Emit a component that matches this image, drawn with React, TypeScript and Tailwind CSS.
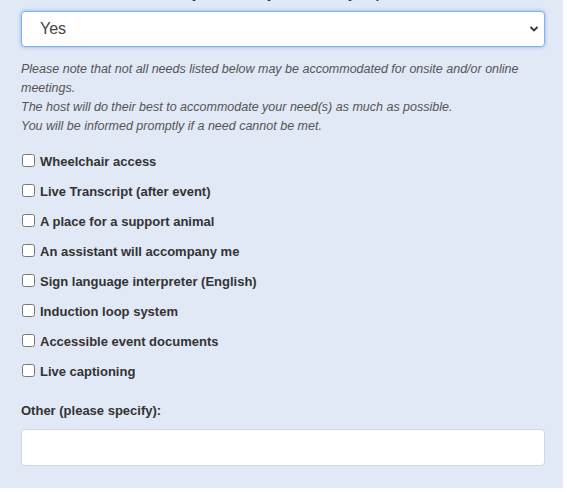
import React, { useState } from 'react';

const needs = [
  'Wheelchair access',
  'Live Transcript (after event)',
  'A place for a support animal',
  'An assistant will accompany me',
  'Sign language interpreter (English)',
  'Induction loop system',
  'Accessible event documents',
  'Live captioning',
];

export default function App() {
  const [answer, setAnswer] = useState('Yes');
  const [checked, setChecked] = useState<string[]>([]);
  const [other, setOther] = useState('');

  const toggle = (n: string) =>
    setChecked(prev => (prev.includes(n) ? prev.filter(x => x !== n) : [...prev, n]));

  return (
    <div className="w-[563px] h-[488px] overflow-hidden bg-[#e1e8f6] font-['Liberation_Sans',Arial,sans-serif]">
      <div className="px-[21px] pr-[18px]">
        {/* Question label, scrolled mostly out of view */}
        <p className="-mt-[14px] h-[16px] text-[13px] font-bold text-[#333] leading-[16px] pl-[150px]">
          Do you have any accessibility requirements?
        </p>

        <div className="relative mt-[9px]">
          <select
            value={answer}
            onChange={e => setAnswer(e.target.value)}
            className="w-full h-[36px] appearance-none rounded-[4px] border border-[#80b3f0] bg-white pl-[18px] text-[16px] text-[#444] shadow-[0_0_3px_1px_rgba(102,160,235,0.45)] outline-none"
          >
            <option>Yes</option>
            <option>No</option>
          </select>
          <svg className="pointer-events-none absolute right-[6px] top-[14px] w-[10px] h-[8px]" viewBox="0 0 10 8">
            <path d="M1.5 2 L5 5.5 L8.5 2" fill="none" stroke="#333" strokeWidth="1.8" />
          </svg>
        </div>

        {/* Note */}
        <div className="mt-[13px] text-[12.5px] italic leading-[19px] text-[#555]">
          <p>Please note that not all needs listed below may be accommodated for onsite and/or online meetings.</p>
          <p>The host will do their best to accommodate your need(s) as much as possible.</p>
          <p>You will be informed promptly if a need cannot be met.</p>
        </div>

        {/* Needs */}
        <div className="mt-[18px] flex flex-col">
          {needs.map(n => (
            <label key={n} className="flex h-[30px] items-start gap-[5px] cursor-pointer">
              <input
                type="checkbox"
                checked={checked.includes(n)}
                onChange={() => toggle(n)}
                className="mt-[0px] ml-[1px] h-[13px] w-[13px] shrink-0"
              />
              <span className="text-[13px] font-bold leading-[16px] text-[#333]">{n}</span>
            </label>
          ))}
        </div>

        {/* Other */}
        <p className="mt-[9px] text-[13px] font-bold leading-[16px] text-[#333]">Other (please specify):</p>
        <input
          value={other}
          onChange={e => setOther(e.target.value)}
          className="mt-[10px] h-[37px] w-full rounded-[4px] border border-[#d3d6da] bg-white px-3 text-[14px] outline-none"
        />
      </div>
    </div>
  );
}
